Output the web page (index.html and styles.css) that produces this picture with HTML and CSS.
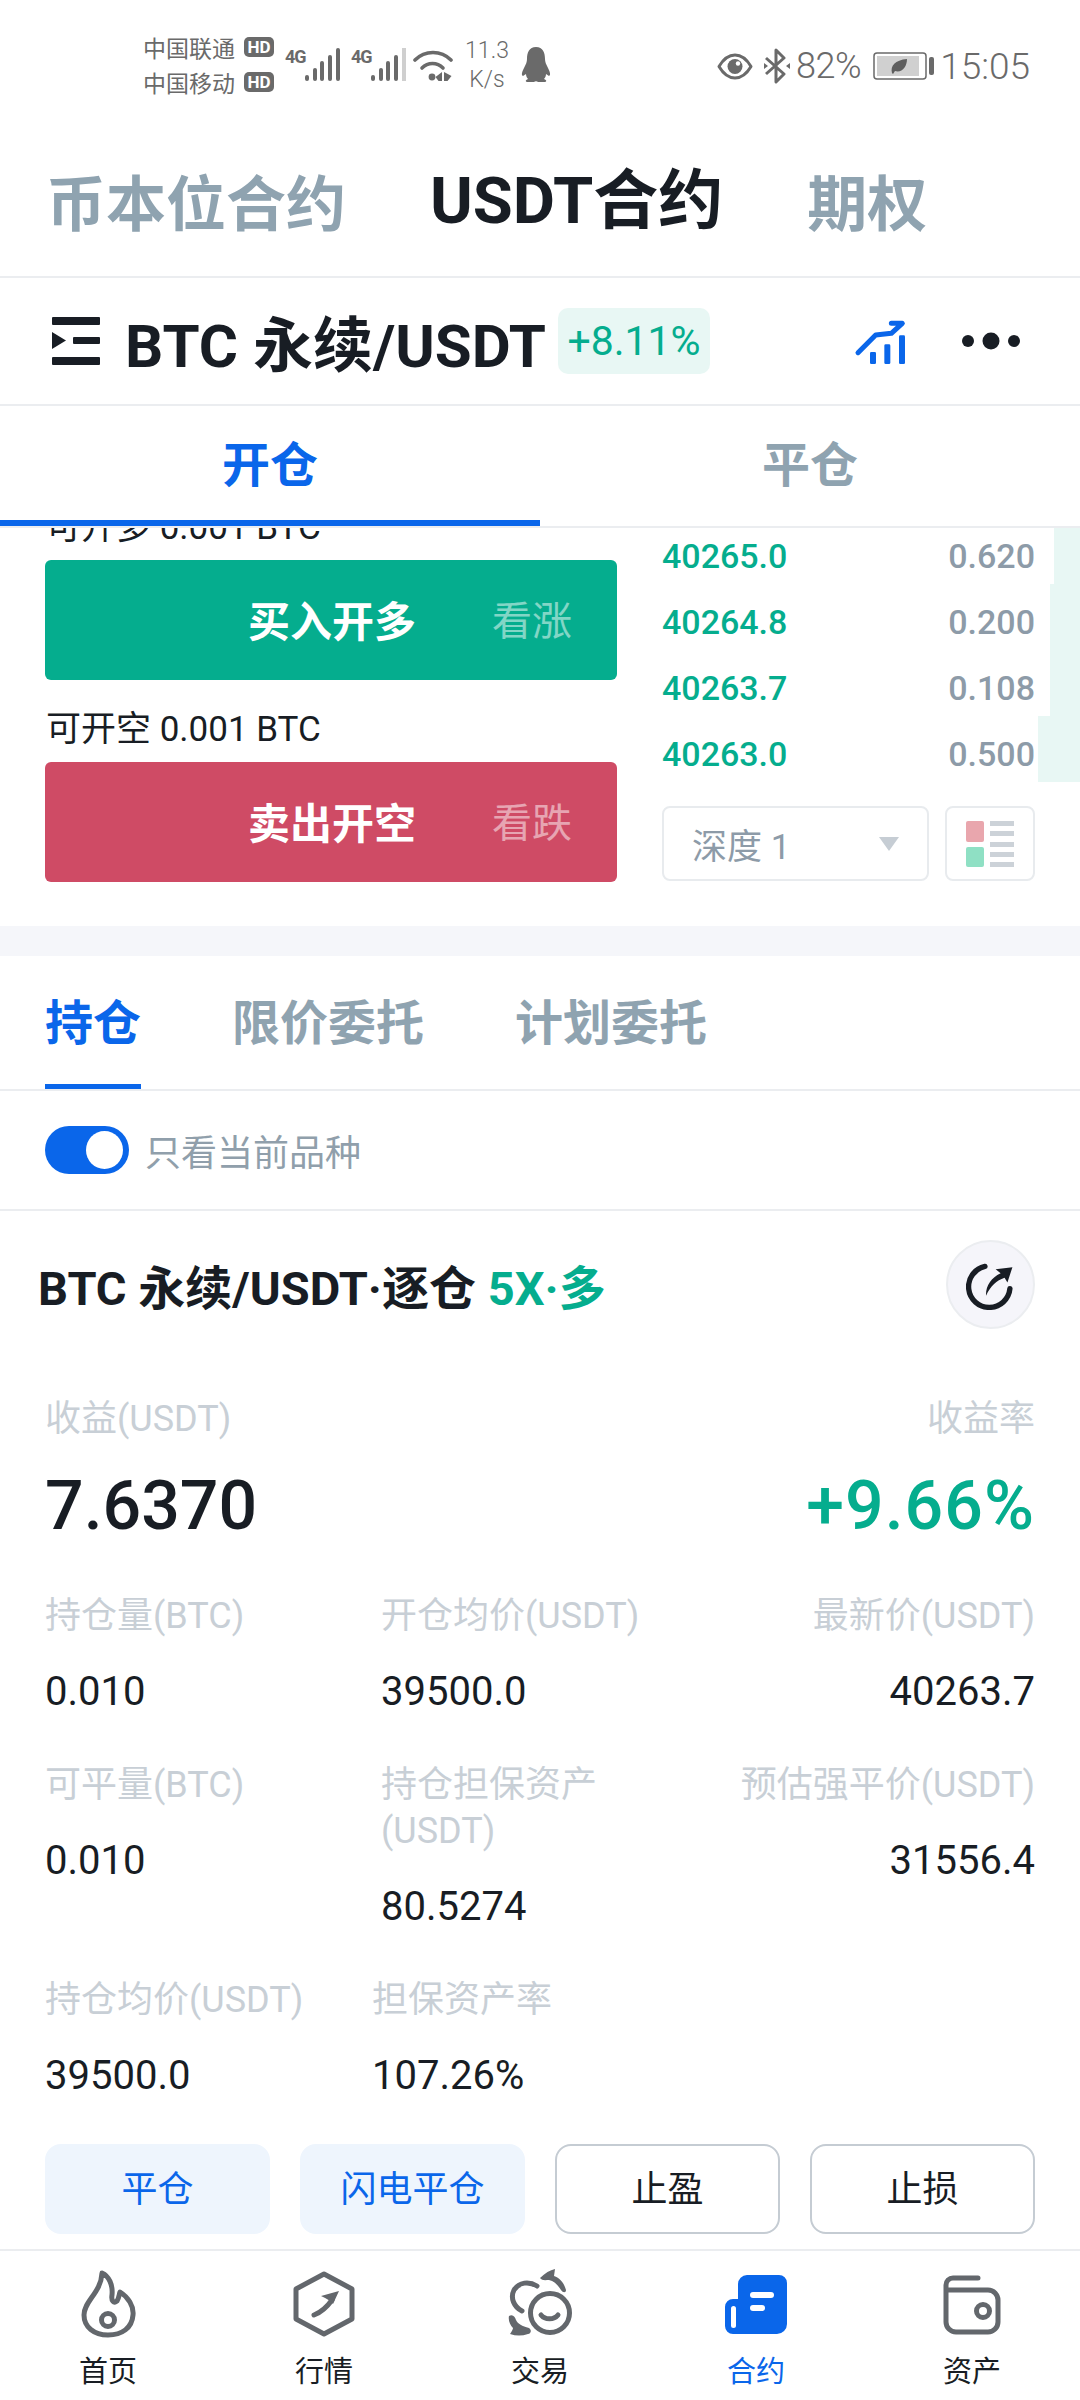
FILE: index.html
```html
<!DOCTYPE html>
<html lang="zh-CN">
<head>
    <meta charset="UTF-8">
    <meta name="viewport" content="width=device-width, initial-scale=1.0">
    <title>USDT合约</title>
    <link rel="stylesheet" href="styles.css">
</head>
<body>
    <div class="status-bar">
        <div class="status-left">
            <div class="carriers">
                <div class="carrier">中国联通<span class="hd">HD</span></div>
                <div class="carrier">中国移动<span class="hd">HD</span></div>
            </div>
            <div class="net">
                <span class="net-type">4G</span>
                <svg width="36" height="33" viewBox="0 0 36 33"><g fill="#6a6a6a"><rect x="1" y="27" width="4" height="6" rx="2"/><rect x="9" y="20" width="4" height="13" rx="2"/><rect x="16" y="13" width="4" height="20" rx="2"/><rect x="24" y="7" width="4" height="26" rx="2"/><rect x="32" y="0" width="4" height="33" rx="2"/></g></svg>
            </div>
            <div class="net">
                <span class="net-type">4G</span>
                <svg width="36" height="33" viewBox="0 0 36 33"><g fill="#6a6a6a"><rect x="1" y="27" width="4" height="6" rx="2"/><rect x="9" y="20" width="4" height="13" rx="2"/><rect x="16" y="13" width="4" height="20" rx="2"/><rect x="24" y="7" width="4" height="26" rx="2"/><rect x="32" y="0" width="4" height="33" fill="#cfcfcf"/></g></svg>
            </div>
            <svg class="wifi" width="40" height="33" viewBox="0 0 40 33"><g fill="none" stroke="#6a6a6a" stroke-width="3.6" stroke-linecap="round"><path d="M2 11C12 1 28 1 38 11"/><path d="M9 19C15 13 24 13 30 19"/></g><g fill="#6a6a6a"><circle cx="19" cy="28" r="3.4"/><path d="M29 23v9h-3.500l-3-4zM31 23v9h3.500l4-5z"/></g></svg>
            <div class="speed"><span>11.3</span><span>K/s</span></div>
            <svg width="30" height="36" viewBox="0 0 30 36"><path fill="#6a6a6a" d="M15 0C8 0 6 6 6 12C6 15 5 17 3 21C1 25 0 28 2 29L5 27C5 29 6 31 7 32C4 33 4 35 7 35H13C14 34 16 34 17 35H23C26 35 26 33 23 32C24 31 25 29 25 27L28 29C30 28 29 25 27 21C25 17 24 15 24 12C24 6 22 0 15 0Z"/></svg>
        </div>
        <div class="status-right">
            <svg width="36" height="27" viewBox="0 0 36 27"><path fill="none" stroke="#6a6a6a" stroke-width="3" stroke-linejoin="round" d="M2 13.500C7 5 12 2 18 2C24 2 29 5 34 13.500C29 22 24 25 18 25C12 25 7 22 2 13.500Z"/><circle cx="18" cy="13.500" r="7.500" fill="#6a6a6a"/><circle cx="21" cy="10.500" r="2.200" fill="#fff"/></svg>
            <svg class="bt" width="26" height="36" viewBox="0 0 26 36"><path fill="none" stroke="#6a6a6a" stroke-width="3" stroke-linejoin="round" d="M2 10L20 26L12 34V2L20 10L2 26"/><path fill="#6a6a6a" d="M0 15l4 3l-4 3zM26 15l-4 3l4 3z"/></svg>
            <span class="pct">82%</span>
            <svg class="battery" width="61" height="28" viewBox="0 0 61 28"><rect x="1" y="1" width="52" height="26" rx="3" fill="none" stroke="#6a6a6a" stroke-width="1.500"/><rect x="4" y="4" width="42" height="20" fill="#d0d0d0"/><rect x="56" y="5" width="5" height="18" rx="2" fill="#6a6a6a"/><path fill="#5e5e5e" d="M19 21C17 14 22 8 34 7C34 15 29 21 22 19L20 22Z"/></svg>
            <span class="clock">15:05</span>
        </div>
    </div>

    <div class="top-tabs">
        <div class="top-tab">币本位合约</div>
        <div class="top-tab active">USDT合约</div>
        <div class="top-tab">期权</div>
    </div>

    <div class="pair-bar">
        <svg class="pair-menu" width="48" height="48" viewBox="0 0 48 48"><g fill="#181d24"><rect y="0" width="48" height="8" rx="1"/><rect x="21" y="20" width="27" height="7" rx="1"/><rect y="40" width="48" height="8" rx="1"/><path d="M0 15L14 23.500L0 32Z"/></g></svg>
        <div class="pair-name">BTC 永续/USDT</div>
        <div class="pair-change">+8.11%</div>
        <svg class="pair-chart" width="56" height="50" viewBox="40 50 168 150"><path fill="none" stroke="#0a66ea" stroke-width="15" stroke-linecap="round" stroke-linejoin="round" d="M55 160L108 107L155 102L188 72H155"/><g fill="#0a66ea"><rect x="91" y="158" width="18" height="36" rx="4"/><rect x="134" y="135" width="18" height="59" rx="4"/><rect x="178" y="108" width="18" height="86" rx="4"/></g></svg>
        <svg class="pair-more" width="58" height="18" viewBox="0 0 58 18"><g fill="#181d24"><circle cx="6" cy="9" r="6"/><circle cx="29" cy="9" r="8.500"/><circle cx="52" cy="9" r="6"/></g></svg>
    </div>

    <div class="side-tabs">
        <div class="side-tab active">开仓</div>
        <div class="side-tab">平仓</div>
    </div>

    <div class="trade">
        <div class="trade-left">
            <div class="avail">可开多 0.001 BTC</div>
            <div class="order-btn buy"><b>买入开多</b><span>看涨</span></div>
            <div class="avail">可开空 0.001 BTC</div>
            <div class="order-btn sell"><b>卖出开空</b><span>看跌</span></div>
        </div>
        <div class="trade-right">
            <div class="depth-row"><i class="depth-bar" style="width:26px"></i><span class="price">40265.0</span><span class="qty">0.620</span></div>
            <div class="depth-row"><i class="depth-bar" style="width:30px"></i><span class="price">40264.8</span><span class="qty">0.200</span></div>
            <div class="depth-row"><i class="depth-bar" style="width:30px"></i><span class="price">40263.7</span><span class="qty">0.108</span></div>
            <div class="depth-row"><i class="depth-bar" style="width:42px"></i><span class="price">40263.0</span><span class="qty">0.500</span></div>
            <div class="depth-tools">
                <div class="depth-select">深度 1<i class="caret"></i></div>
                <div class="depth-mode">
                    <svg width="48" height="46" viewBox="0 0 48 46"><rect x="0" y="0" width="18" height="21" rx="2" fill="#e9a6ad"/><rect x="0" y="26" width="18" height="20" rx="2" fill="#8fe0c4"/><g fill="#ccd2d8"><rect x="24" y="0" width="24" height="5"/><rect x="24" y="10" width="24" height="5"/><rect x="24" y="21" width="24" height="5"/><rect x="24" y="31" width="24" height="5"/><rect x="24" y="41" width="24" height="5"/></g></svg>
                </div>
            </div>
        </div>
    </div>

    <div class="band"></div>

    <div class="list-tabs">
        <div class="list-tab active">持仓</div>
        <div class="list-tab">限价委托</div>
        <div class="list-tab">计划委托</div>
    </div>

    <div class="filter-row">
        <div class="toggle"><i></i></div>
        <span>只看当前品种</span>
    </div>

    <div class="position">
        <div class="pos-head">
            <div class="pos-title">BTC 永续/USDT·逐仓 <em>5X·多</em></div>
            <div class="share-btn">
                <svg width="50" height="50" viewBox="80 80 140 140"><path fill="none" stroke="#181d24" stroke-width="15" stroke-linecap="round" d="M133 98A58 58 0 1 0 203 160"/><path fill="#181d24" d="M210 100L163 106L177 117C150 130 135 152 136 180C150 152 165 138 188 130L196 143Z"/></svg>
            </div>
        </div>

        <div class="pnl-labels"><span>收益(USDT)</span><span>收益率</span></div>
        <div class="pnl-values"><span>7.6370</span><span class="up">+9.66%</span></div>

        <div class="stat-row">
            <div class="stat col-a"><div class="stat-label">持仓量(BTC)</div><div class="stat-value">0.010</div></div>
            <div class="stat col-b"><div class="stat-label">开仓均价(USDT)</div><div class="stat-value">39500.0</div></div>
            <div class="stat col-c"><div class="stat-label">最新价(USDT)</div><div class="stat-value">40263.7</div></div>
        </div>
        <div class="stat-row">
            <div class="stat col-a"><div class="stat-label">可平量(BTC)</div><div class="stat-value">0.010</div></div>
            <div class="stat col-b"><div class="stat-label">持仓担保资产<br>(USDT)</div><div class="stat-value">80.5274</div></div>
            <div class="stat col-c"><div class="stat-label">预估强平价(USDT)</div><div class="stat-value">31556.4</div></div>
        </div>
        <div class="stat-row">
            <div class="stat col-a narrow"><div class="stat-label">持仓均价(USDT)</div><div class="stat-value">39500.0</div></div>
            <div class="stat col-b"><div class="stat-label">担保资产率</div><div class="stat-value">107.26%</div></div>
        </div>

        <div class="actions">
            <div class="action primary">平仓</div>
            <div class="action primary">闪电平仓</div>
            <div class="action">止盈</div>
            <div class="action">止损</div>
        </div>
    </div>

    <div class="nav">
        <div class="nav-item">
            <svg width="72" height="72" viewBox="0 0 72 72"><g fill="none" stroke="#63676c" stroke-width="5" stroke-linejoin="round"><path d="M30 5C37 8 41 17 40 27C39 33 42 36 45 33C47 30 47 27 48 24C56 29 62 38 61 47C60 60 50 67 36 67C22 67 12 59 12 47C12 33 29 25 30 5Z"/><circle cx="36" cy="52" r="6.500"/></g></svg>
            <span>首页</span>
        </div>
        <div class="nav-item">
            <svg width="72" height="72" viewBox="0 0 72 72"><path fill="none" stroke="#63676c" stroke-width="5" stroke-linejoin="round" d="M36 6L64 21V51L36 66L8 51V21Z"/><path fill="none" stroke="#63676c" stroke-width="5" stroke-linecap="round" d="M26 47C34 44 39 39 44 32"/><path fill="#63676c" d="M33 28L51 23L45 36C43 33 39 31 33 28Z"/></svg>
            <span>行情</span>
        </div>
        <div class="nav-item">
            <svg width="72" height="72" viewBox="0 0 72 72"><g fill="none" stroke="#63676c" stroke-width="5" stroke-linecap="round"><circle cx="46" cy="45" r="19.500"/><path d="M37 47C41 52 50 52 54 47"/><path d="M33 18C25 13 15 14 10 22C6 30 10 39 18 43"/></g><path fill="#63676c" d="M36 10C41 5 46 2 51 1L50 8C56 10 60 15 62 22C62 25 59 25 57 22C54 17 50 13 45 12C42 12 38 13 36 10ZM5 48C9 46 11 49 12 52C14 56 18 58 25 60C28 62 27 66 24 66C18 68 12 68 6 66C8 63 9 61 9 60C6 57 4 52 5 48Z"/></svg>
            <span>交易</span>
        </div>
        <div class="nav-item active">
            <svg width="72" height="72" viewBox="0 0 72 72"><path fill="#0a66ea" d="M27 7H59A8 8 0 0 1 67 15V56A10 10 0 0 1 57 66H13A8 8 0 0 1 5 58V39A8 8 0 0 1 13 31H18V16A9 9 0 0 1 27 7Z"/><g fill="#fff"><rect x="30" y="24" width="24" height="6" rx="3"/><rect x="30" y="37" width="15" height="6" rx="3"/><rect x="11" y="38" width="5" height="22" rx="2.500"/></g></svg>
            <span>合约</span>
        </div>
        <div class="nav-item">
            <svg width="72" height="72" viewBox="0 0 72 72"><g fill="none" stroke="#63676c" stroke-width="5" stroke-linecap="round"><path d="M42 10H17A7 7 0 0 0 10 17V54A10 10 0 0 0 20 64H52A10 10 0 0 0 62 54V32A10 10 0 0 0 52 22H10"/><circle cx="47" cy="43" r="6.500"/></g></svg>
            <span>资产</span>
        </div>
    </div>
</body>
</html>
```

FILE: styles.css
```css
* {
    box-sizing: border-box;
}
body {
    margin: 0;
    width: 1080px;
    height: 2400px;
    overflow: hidden;
    background-color: #fff;
    color: #181d24;
    font-family: Roboto, "Noto Sans CJK SC", sans-serif;
}
svg {
    display: block;
    flex: none;
}

/* status bar */
.status-bar {
    height: 130px;
    padding: 0 50px 0 143px;
    display: flex;
    justify-content: space-between;
    align-items: center;
    color: #6a6a6a;
}
.status-left {
    display: flex;
    align-items: center;
    gap: 11px;
}
.status-right {
    display: flex;
    align-items: center;
    gap: 12px;
    margin-top: 2px;
}
.carriers {
    margin-top: -2px;
}
.carrier {
    display: flex;
    align-items: center;
    height: 35px;
    font-size: 23px;
    gap: 9px;
}
.hd {
    width: 30px;
    height: 20px;
    line-height: 20px;
    text-align: center;
    border-radius: 5px;
    background-color: #6a6a6a;
    color: #fff;
    font-size: 17px;
    font-weight: 700;
}
.net {
    display: flex;
    align-items: flex-start;
    margin-top: -2px;
}
.net-type {
    width: 18px;
    margin-right: 1px;
    font-family: "Liberation Sans Narrow", Roboto, sans-serif;
    font-size: 18px;
    line-height: 18px;
    font-weight: 700;
    letter-spacing: -1px;
}
.wifi {
    margin-left: -4px;
}
.speed {
    width: 46px;
    display: flex;
    flex-direction: column;
    align-items: center;
    font-size: 23px;
    line-height: 29px;
    font-weight: 300;
}
.speed span {
    white-space: nowrap;
}
.bt {
    margin-left: -1px;
    margin-right: -6px;
}
.pct {
    font-size: 36px;
    font-weight: 300;
    letter-spacing: -0.5px;
}
.clock {
    font-size: 37px;
    font-weight: 300;
}
.battery {
    margin-right: -6px;
}

/* contract type tabs */
.top-tabs {
    height: 148px;
    padding: 0 0 8px 46px;
    display: flex;
    align-items: center;
    gap: 84px;
    border-bottom: 2px solid #ebedf0;
}
.top-tab {
    font-size: 60px;
    font-weight: 700;
    color: #8fa3b0;
    white-space: nowrap;
}
.top-tab.active {
    font-size: 65px;
    color: #181d24;
    margin-bottom: 8px;
}

.pair-bar {
    height: 128px;
    padding-left: 52px;
    display: flex;
    align-items: center;
    border-bottom: 2px solid #ebedf0;
}
.pair-menu {
    margin-right: 25px;
}
.pair-name {
    font-size: 60px;
    font-weight: 700;
    white-space: nowrap;
    margin-top: -2px;
}
.pair-change {
    width: 152px;
    height: 66px;
    line-height: 66px;
    margin-left: 12px;
    border-radius: 10px;
    text-align: center;
    font-size: 41px;
    color: #05ad8e;
    background-color: #e8f7f4;
}
.pair-chart {
    margin-left: 143px;
}
.pair-more {
    margin-left: 53px;
}

.side-tabs {
    height: 122px;
    display: flex;
    border-bottom: 2px solid #ebedf0;
}
.side-tab {
    width: 50%;
    height: 120px;
    text-align: center;
    line-height: 120px;
    font-size: 48px;
    font-weight: 700;
    color: #8fa3b0;
}
.side-tab.active {
    color: #0a66ea;
    border-bottom: 6px solid #0a66ea;
}

/* order form, scrolled under the tabs */
.trade {
    height: 398px;
    overflow: hidden;
    display: flex;
}
.trade-left {
    width: 662px;
    padding-left: 45px;
    margin-top: -25px;
}
.avail {
    height: 50px;
    line-height: 50px;
    font-size: 35px;
    margin-left: 1px;
    white-space: nowrap;
}
.order-btn {
    width: 572px;
    height: 120px;
    margin: 7px 0 25px;
    padding: 0 0 4px 203px;
    display: flex;
    align-items: center;
    border-radius: 6px;
    color: #fff;
}
.order-btn b {
    font-size: 42px;
    margin-right: 76px;
}
.order-btn span {
    font-size: 40px;
    opacity: 0.5;
}
.buy {
    background-color: #05ad8e;
}
.sell {
    background-color: #cf4b65;
}
.trade-right {
    flex: 1;
    margin-top: -10px;
}
.depth-row {
    position: relative;
    height: 66px;
    padding: 10px 45px 0 0;
    display: flex;
    justify-content: space-between;
    align-items: center;
    font-size: 34px;
    font-weight: 500;
}
.depth-bar {
    position: absolute;
    top: 0;
    right: 0;
    bottom: 0;
    background-color: #e8f7f4;
}
.price {
    color: #05ad8e;
}
.qty {
    position: relative;
    color: #8d9ba8;
}
.depth-tools {
    margin-top: 24px;
    display: flex;
    gap: 16px;
}
.depth-select {
    width: 267px;
    height: 75px;
    padding: 0 28px;
    display: flex;
    justify-content: space-between;
    align-items: center;
    border: 2px solid #e8ebee;
    border-radius: 8px;
    font-size: 35px;
    color: #8d9ba8;
}
.caret {
    width: 0;
    height: 0;
    border-left: 10px solid transparent;
    border-right: 10px solid transparent;
    border-top: 14px solid #c6cdd4;
}
.depth-mode {
    width: 90px;
    height: 75px;
    display: flex;
    align-items: center;
    justify-content: center;
    border: 2px solid #e8ebee;
    border-radius: 8px;
}

.band {
    height: 30px;
    background-color: #f5f6fa;
}

/* positions */
.list-tabs {
    height: 135px;
    padding-left: 45px;
    display: flex;
    gap: 91px;
    border-bottom: 2px solid #ebedf0;
}
.list-tab {
    height: 133px;
    line-height: 136px;
    font-size: 48px;
    font-weight: 700;
    color: #8fa3b0;
}
.list-tab.active {
    color: #0a66ea;
    border-bottom: 5px solid #0a66ea;
}
.filter-row {
    height: 120px;
    padding-left: 45px;
    display: flex;
    align-items: center;
    gap: 16px;
    font-size: 36px;
    color: #909fab;
    border-bottom: 2px solid #ebedf0;
}
.toggle {
    width: 84px;
    height: 48px;
    padding: 5px 6px;
    display: flex;
    justify-content: flex-end;
    border-radius: 24px;
    background-color: #0a66ea;
}
.toggle i {
    width: 37px;
    height: 38px;
    border-radius: 50%;
    background-color: #fff;
}
.position {
    padding: 29px 45px 0;
}
.pos-head {
    display: flex;
    justify-content: space-between;
    align-items: center;
}
.pos-title {
    margin-left: -7px;
    font-size: 47px;
    font-weight: 700;
    white-space: nowrap;
}
.pos-title em {
    font-style: normal;
    color: #05ad8e;
}
.share-btn {
    width: 89px;
    height: 89px;
    display: flex;
    align-items: center;
    justify-content: center;
    border: 2px solid #ebedf0;
    border-radius: 50%;
    background-color: #f5f5fa;
}
.pnl-labels {
    margin-top: 65px;
    display: flex;
    justify-content: space-between;
    font-size: 36px;
    line-height: 50px;
    color: #c8cfd6;
}
.pnl-values {
    margin-top: 22px;
    display: flex;
    justify-content: space-between;
    font-size: 68px;
    font-weight: 500;
    line-height: 80px;
}
.up {
    color: #05ad8e;
    letter-spacing: 1px;
}
.stat-row {
    margin-top: 47px;
    display: flex;
}
.stat-label {
    font-size: 36px;
    line-height: 46px;
    color: #c8cfd6;
    white-space: nowrap;
}
.stat-value {
    margin-top: 30px;
    font-size: 40px;
    line-height: 46px;
}
.col-a {
    width: 336px;
}
.col-a.narrow {
    width: 327px;
}
.col-c {
    margin-left: auto;
    text-align: right;
}
.actions {
    margin-top: 45px;
    display: flex;
    gap: 30px;
}
.action {
    width: 225px;
    height: 90px;
    line-height: 88px;
    border: 2px solid #c5ccd3;
    border-radius: 16px;
    text-align: center;
    font-size: 36px;
}
.action.primary {
    border-color: #eef5fd;
    background-color: #eef5fd;
    color: #0a66ea;
}

/* bottom nav */
.nav {
    position: absolute;
    left: 0;
    top: 2249px;
    width: 1080px;
    height: 151px;
    padding-top: 17px;
    display: flex;
    border-top: 2px solid #ebedf0;
}
.nav-item {
    width: 216px;
    display: flex;
    flex-direction: column;
    align-items: center;
    font-size: 29px;
}
.nav-item span {
    margin-top: 12px;
    line-height: 40px;
}
.nav-item.active {
    color: #0a66ea;
}
```
